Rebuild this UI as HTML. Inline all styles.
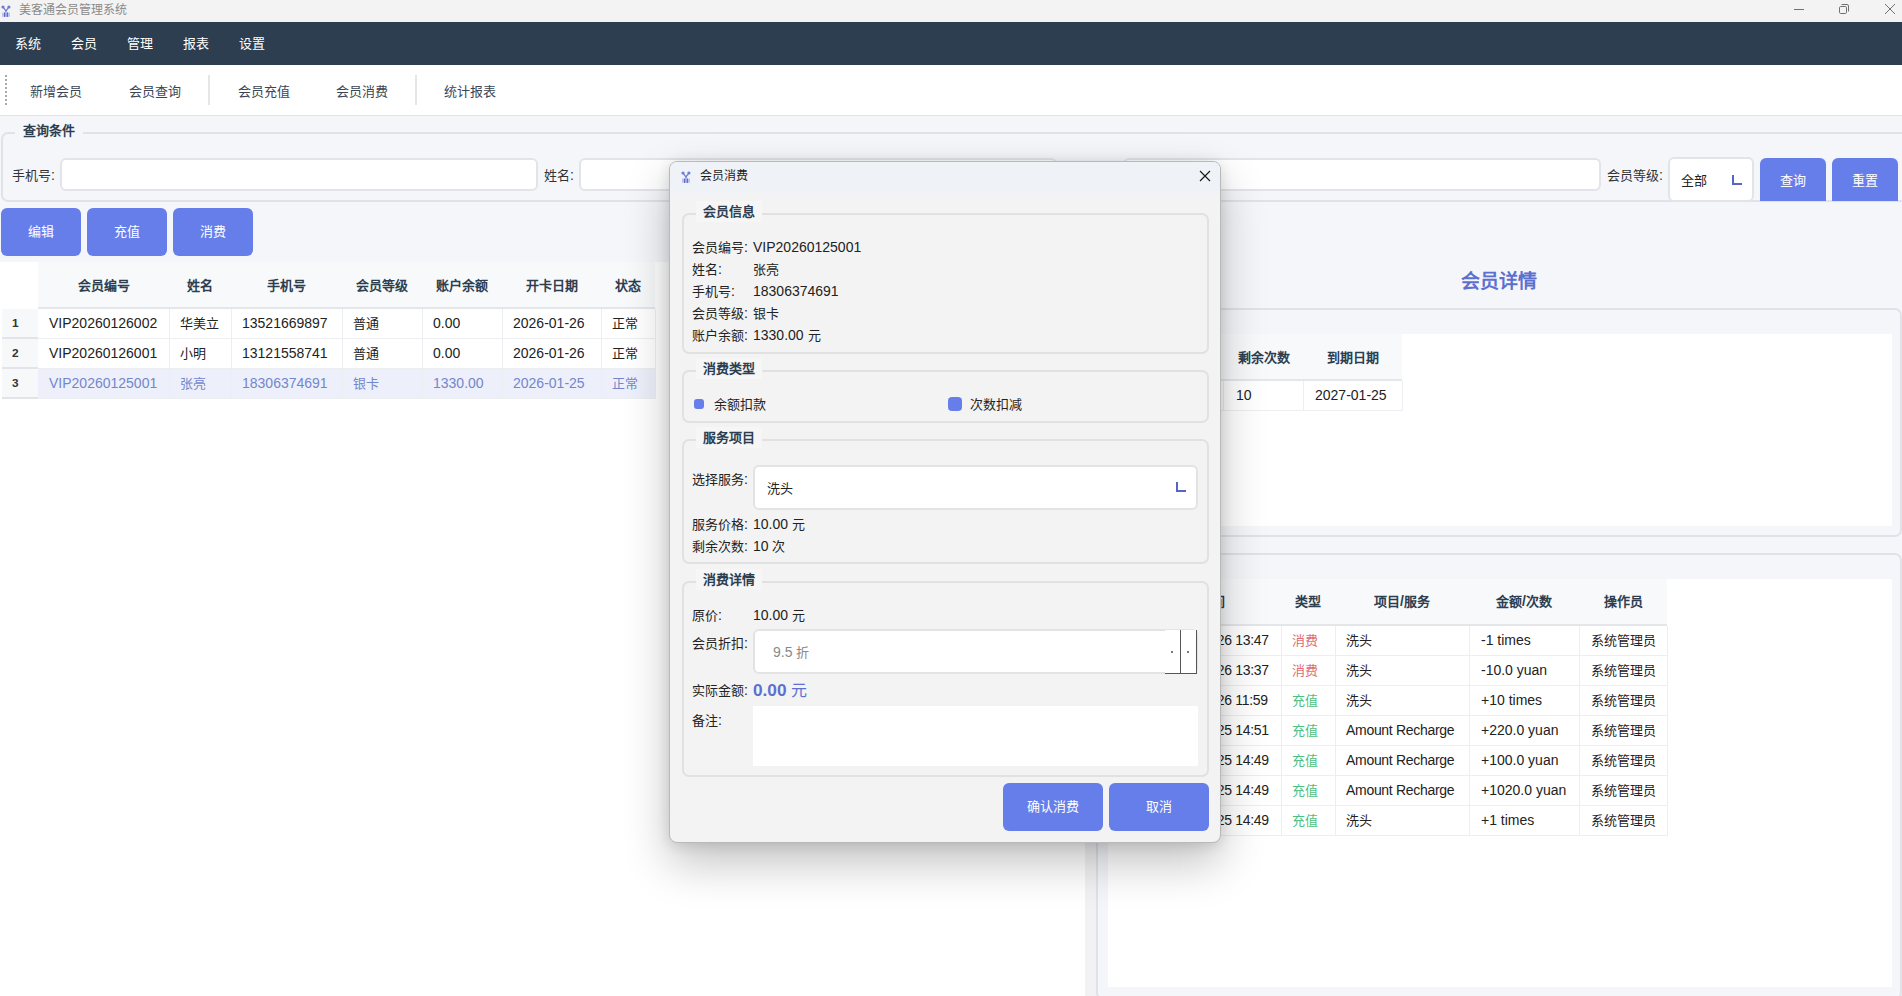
<!DOCTYPE html>
<html lang="zh-CN"><head><meta charset="utf-8">
<style>
*{box-sizing:border-box}
html,body{margin:0;padding:0}
body{width:1902px;height:996px;overflow:hidden;position:relative;background:#f5f6fa;font-family:"Liberation Sans",sans-serif;font-size:13px;color:#333}
.a{position:absolute}
.t{position:absolute;white-space:nowrap;line-height:16px}
/* title bar */
#tb{left:0;top:0;width:1902px;height:22px;background:#f3f3f3}
#mb{left:0;top:22px;width:1902px;height:43px;background:#2c3e50}
.mi{color:#fff;top:35px}
#tool{left:0;top:65px;width:1902px;height:51px;background:#fff;border-bottom:1px solid #e1e3e8}
.ti{color:#3a4654;top:83px}
.gb{position:absolute;border:2px solid #e0e2e7;border-radius:7px}
.gt{position:absolute;font-weight:bold;color:#2c3e50;padding:0 8px;white-space:nowrap;line-height:17px}
.inp{position:absolute;background:#fff;border:2px solid #e2e4e9;border-radius:6px}
.btn{position:absolute;background:#667eea;border-radius:6px;color:#fff;text-align:center}
.lbl{color:#333}
.th{font-weight:bold;color:#2c3e50;text-align:center}
.td{color:#222}
.td.sel{color:#7386cc}
.rn{font-weight:bold;color:#333;font-size:11px}
.dl{color:#222}
.L{font-size:1.077em}
.zh{line-height:17px}
</style></head><body>

<!-- window title bar -->
<div class="a" id="tb"></div>
<svg class="a" style="left:1px;top:5px" width="10" height="12" viewBox="0 0 10 12"><g fill="#6f7dd4"><circle cx="2" cy="2" r="1.6"/><circle cx="7.9" cy="2" r="1.6"/></g><path d="M2.6 2.8L4.95 5.8M7.3 2.8L4.95 5.8" stroke="#6f7dd4" stroke-width="1.3"/><rect x="4.3" y="5.4" width="1.3" height="2" fill="#6775cc"/><rect x="1" y="7.6" width="8" height="4.2" fill="#bac3f2"/><rect x="3" y="7.5" width="1.3" height="4.4" fill="#5f6dc8"/><rect x="5.7" y="7.5" width="1.3" height="4.4" fill="#5f6dc8"/></svg>
<div class="a" style="left:1794px;top:9px;width:10px;height:1px;background:#707070"></div>
<svg class="a" style="left:1838px;top:3px" width="12" height="12" viewBox="0 0 12 12"><rect x="1.5" y="3.5" width="7" height="7" rx="1.2" fill="none" stroke="#707070" stroke-width="1"/><path d="M3.5 1.5H9a1.5 1.5 0 0 1 1.5 1.5V8.5" fill="none" stroke="#707070" stroke-width="1"/></svg>
<svg class="a" style="left:1884px;top:3px" width="12" height="12" viewBox="0 0 12 12"><path d="M1 1L11 11M11 1L1 11" stroke="#707070" stroke-width="1"/></svg>
<div class="t zh" style="left:19px;top:2px;font-size:12px;color:#8a8a8a">美客通会员管理系统</div>

<!-- menu bar -->
<div class="a" id="mb"></div>
<div class="t zh mi" style="left:15px">系统</div>
<div class="t zh mi" style="left:71px">会员</div>
<div class="t zh mi" style="left:127px">管理</div>
<div class="t zh mi" style="left:183px">报表</div>
<div class="t zh mi" style="left:239px">设置</div>

<!-- toolbar -->
<div class="a" id="tool"></div>
<div class="a" style="left:5px;top:75px;width:2px;height:31px;background:repeating-linear-gradient(#a9a9a9 0 2px,transparent 2px 4px)"></div>
<div class="t zh ti" style="left:30px">新增会员</div>
<div class="t zh ti" style="left:129px">会员查询</div>
<div class="a" style="left:208px;top:75px;width:2px;height:30px;background:#e6e6e6"></div>
<div class="t zh ti" style="left:238px">会员充值</div>
<div class="t zh ti" style="left:336px">会员消费</div>
<div class="a" style="left:415px;top:75px;width:2px;height:30px;background:#e6e6e6"></div>
<div class="t zh ti" style="left:444px">统计报表</div>

<!-- search group -->
<div class="gb" style="left:1px;top:132px;width:1910px;height:70px"></div>
<div class="gt" style="left:15px;top:122px;background:#f5f6fa">查询条件</div>
<div class="t lbl" style="left:12px;top:167px">手机号<span class="L">:</span></div>
<div class="inp" style="left:60px;top:158px;width:478px;height:33px"></div>
<div class="t lbl" style="left:544px;top:167px">姓名<span class="L">:</span></div>
<div class="inp" style="left:579px;top:158px;width:478px;height:33px"></div>
<div class="t lbl" style="left:1063px;top:167px">会员卡号<span class="L">:</span></div>
<div class="inp" style="left:1123px;top:158px;width:478px;height:33px"></div>
<div class="t lbl" style="left:1607px;top:167px">会员等级<span class="L">:</span></div>
<div class="inp" style="left:1668px;top:157px;width:86px;height:45px"></div>
<div class="t zh" style="left:1681px;top:172px;color:#222">全部</div>
<div class="a" style="left:1732px;top:175px;width:10px;height:10px;border-left:2px solid #5566c8;border-bottom:2px solid #5566c8"></div>
<div class="btn" style="left:1760px;top:158px;width:66px;height:43px;border-radius:6px 6px 0 0;line-height:46px">查询</div>
<div class="btn" style="left:1832px;top:158px;width:66px;height:43px;border-radius:6px 6px 0 0;line-height:46px">重置</div>

<!-- left panel -->
<div class="btn" style="left:1px;top:208px;width:80px;height:48px;line-height:47px">编辑</div>
<div class="btn" style="left:87px;top:208px;width:80px;height:48px;line-height:47px">充值</div>
<div class="btn" style="left:173px;top:208px;width:80px;height:48px;line-height:47px">消费</div>
<div class="a" style="left:0;top:262px;width:1085px;height:734px;background:#fff"></div>
<div class="a" style="left:38px;top:262px;width:617px;height:46px;background:#f8f9fb"></div>
<div class="a" style="left:38px;top:307px;width:617px;height:2px;background:#e4e6ea"></div>
<div class="t zh th" style="left:38px;top:277px;width:131px">会员编号</div>
<div class="t zh th" style="left:169px;top:277px;width:62px">姓名</div>
<div class="t zh th" style="left:231px;top:277px;width:111px">手机号</div>
<div class="t zh th" style="left:342px;top:277px;width:80px">会员等级</div>
<div class="t zh th" style="left:422px;top:277px;width:80px">账户余额</div>
<div class="t zh th" style="left:502px;top:277px;width:99px">开卡日期</div>
<div class="t zh th" style="left:601px;top:277px;width:54px">状态</div>
<div class="a" style="left:2px;top:309px;width:36px;height:30px;background:#f7f8fa;border-bottom:2px solid #e2e4e8"></div>
<div class="t rn" style="left:12px;top:315px"><span class="L">1</span></div>
<div class="a" style="left:38px;top:309px;width:132px;height:30px;border-right:1px solid #eceef1;border-bottom:1px solid #eceef1"></div>
<div class="t td" style="left:49px;top:315px"><span class="L">VIP20260126002</span></div>
<div class="a" style="left:169px;top:309px;width:63px;height:30px;border-right:1px solid #eceef1;border-bottom:1px solid #eceef1"></div>
<div class="t zh td" style="left:180px;top:315px">华美立</div>
<div class="a" style="left:231px;top:309px;width:112px;height:30px;border-right:1px solid #eceef1;border-bottom:1px solid #eceef1"></div>
<div class="t td" style="left:242px;top:315px"><span class="L">13521669897</span></div>
<div class="a" style="left:342px;top:309px;width:81px;height:30px;border-right:1px solid #eceef1;border-bottom:1px solid #eceef1"></div>
<div class="t zh td" style="left:353px;top:315px">普通</div>
<div class="a" style="left:422px;top:309px;width:81px;height:30px;border-right:1px solid #eceef1;border-bottom:1px solid #eceef1"></div>
<div class="t td" style="left:433px;top:315px"><span class="L">0.00</span></div>
<div class="a" style="left:502px;top:309px;width:100px;height:30px;border-right:1px solid #eceef1;border-bottom:1px solid #eceef1"></div>
<div class="t td" style="left:513px;top:315px"><span class="L">2026-01-26</span></div>
<div class="a" style="left:601px;top:309px;width:55px;height:30px;border-right:1px solid #eceef1;border-bottom:1px solid #eceef1"></div>
<div class="t zh td" style="left:612px;top:315px">正常</div>
<div class="a" style="left:2px;top:339px;width:36px;height:30px;background:#f7f8fa;border-bottom:2px solid #e2e4e8"></div>
<div class="t rn" style="left:12px;top:345px"><span class="L">2</span></div>
<div class="a" style="left:38px;top:339px;width:132px;height:30px;border-right:1px solid #eceef1;border-bottom:1px solid #eceef1"></div>
<div class="t td" style="left:49px;top:345px"><span class="L">VIP20260126001</span></div>
<div class="a" style="left:169px;top:339px;width:63px;height:30px;border-right:1px solid #eceef1;border-bottom:1px solid #eceef1"></div>
<div class="t zh td" style="left:180px;top:345px">小明</div>
<div class="a" style="left:231px;top:339px;width:112px;height:30px;border-right:1px solid #eceef1;border-bottom:1px solid #eceef1"></div>
<div class="t td" style="left:242px;top:345px"><span class="L">13121558741</span></div>
<div class="a" style="left:342px;top:339px;width:81px;height:30px;border-right:1px solid #eceef1;border-bottom:1px solid #eceef1"></div>
<div class="t zh td" style="left:353px;top:345px">普通</div>
<div class="a" style="left:422px;top:339px;width:81px;height:30px;border-right:1px solid #eceef1;border-bottom:1px solid #eceef1"></div>
<div class="t td" style="left:433px;top:345px"><span class="L">0.00</span></div>
<div class="a" style="left:502px;top:339px;width:100px;height:30px;border-right:1px solid #eceef1;border-bottom:1px solid #eceef1"></div>
<div class="t td" style="left:513px;top:345px"><span class="L">2026-01-26</span></div>
<div class="a" style="left:601px;top:339px;width:55px;height:30px;border-right:1px solid #eceef1;border-bottom:1px solid #eceef1"></div>
<div class="t zh td" style="left:612px;top:345px">正常</div>
<div class="a" style="left:2px;top:369px;width:36px;height:30px;background:#f7f8fa;border-bottom:2px solid #e2e4e8"></div>
<div class="t rn" style="left:12px;top:375px"><span class="L">3</span></div>
<div class="a" style="left:38px;top:369px;width:617px;height:29px;background:#edf0fa"></div>
<div class="a" style="left:38px;top:369px;width:132px;height:30px;border-right:1px solid #eceef1;border-bottom:1px solid #eceef1"></div>
<div class="t td sel" style="left:49px;top:375px"><span class="L">VIP20260125001</span></div>
<div class="a" style="left:169px;top:369px;width:63px;height:30px;border-right:1px solid #eceef1;border-bottom:1px solid #eceef1"></div>
<div class="t zh td sel" style="left:180px;top:375px">张亮</div>
<div class="a" style="left:231px;top:369px;width:112px;height:30px;border-right:1px solid #eceef1;border-bottom:1px solid #eceef1"></div>
<div class="t td sel" style="left:242px;top:375px"><span class="L">18306374691</span></div>
<div class="a" style="left:342px;top:369px;width:81px;height:30px;border-right:1px solid #eceef1;border-bottom:1px solid #eceef1"></div>
<div class="t zh td sel" style="left:353px;top:375px">银卡</div>
<div class="a" style="left:422px;top:369px;width:81px;height:30px;border-right:1px solid #eceef1;border-bottom:1px solid #eceef1"></div>
<div class="t td sel" style="left:433px;top:375px"><span class="L">1330.00</span></div>
<div class="a" style="left:502px;top:369px;width:100px;height:30px;border-right:1px solid #eceef1;border-bottom:1px solid #eceef1"></div>
<div class="t td sel" style="left:513px;top:375px"><span class="L">2026-01-25</span></div>
<div class="a" style="left:601px;top:369px;width:55px;height:30px;border-right:1px solid #eceef1;border-bottom:1px solid #eceef1"></div>
<div class="t zh td sel" style="left:612px;top:375px">正常</div>

<!-- splitter + right panel -->
<div class="a" style="left:1085px;top:202px;width:12px;height:794px;background:#f2f2f4"></div>

<!-- right panel -->
<div class="t zh" style="left:1461px;top:271px;font-size:19px;line-height:21px;font-weight:bold;color:#5c70d0">会员详情</div>
<div class="gb" style="left:1096px;top:308px;width:806px;height:229px"></div>
<div class="a" style="left:1108px;top:334px;width:784px;height:192px;background:#fff"></div>
<div class="a" style="left:1108px;top:334px;width:294px;height:46px;background:#f8f9fb"></div>
<div class="a" style="left:1108px;top:379px;width:294px;height:2px;background:#e4e6ea"></div>
<div class="t zh th" style="left:1224px;top:349px;width:79px">剩余次数</div>
<div class="t zh th" style="left:1303px;top:349px;width:99px">到期日期</div>
<div class="a" style="left:1108px;top:381px;width:106px;height:30px;border-right:1px solid #eceef1;border-bottom:1px solid #eceef1"></div>
<div class="a" style="left:1213px;top:381px;width:91px;height:30px;border-right:1px solid #eceef1;border-bottom:1px solid #eceef1"></div>
<div class="a" style="left:1303px;top:381px;width:100px;height:30px;border-right:1px solid #eceef1;border-bottom:1px solid #eceef1"></div>
<div class="a" style="left:1223px;top:381px;width:1px;height:30px;background:#eceef1"></div>
<div class="t td" style="left:1236px;top:387px"><span class="L">10</span></div>
<div class="t td" style="left:1315px;top:387px"><span class="L">2027-01-25</span></div>
<div class="gb" style="left:1096px;top:553px;width:806px;height:447px"></div>
<div class="a" style="left:1108px;top:579px;width:784px;height:408px;background:#fff"></div>
<div class="a" style="left:1108px;top:579px;width:559px;height:46px;background:#f8f9fb"></div>
<div class="a" style="left:1108px;top:624px;width:559px;height:2px;background:#e4e6ea"></div>
<div class="t zh th" style="left:1142px;top:593px;width:139px">时间</div>
<div class="t zh th" style="left:1281px;top:593px;width:54px">类型</div>
<div class="t th" style="left:1335px;top:593px;width:134px">项目<span class="L">/</span>服务</div>
<div class="t th" style="left:1469px;top:593px;width:110px">金额<span class="L">/</span>次数</div>
<div class="t zh th" style="left:1579px;top:593px;width:88px">操作员</div>
<div class="a" style="left:1142px;top:626px;width:140px;height:30px;border-right:1px solid #eceef1;border-bottom:1px solid #eceef1"></div>
<div class="a" style="left:1281px;top:626px;width:55px;height:30px;border-right:1px solid #eceef1;border-bottom:1px solid #eceef1"></div>
<div class="a" style="left:1335px;top:626px;width:135px;height:30px;border-right:1px solid #eceef1;border-bottom:1px solid #eceef1"></div>
<div class="a" style="left:1469px;top:626px;width:111px;height:30px;border-right:1px solid #eceef1;border-bottom:1px solid #eceef1"></div>
<div class="a" style="left:1579px;top:626px;width:89px;height:30px;border-right:1px solid #eceef1;border-bottom:1px solid #eceef1"></div>
<div class="t td" style="left:1163px;top:632px;letter-spacing:-0.3px"><span class="L">2026-01-26 13:47</span></div>
<div class="t zh" style="left:1292px;top:632px;color:#e06c75">消费</div>
<div class="t zh td" style="left:1346px;top:632px">洗头</div>
<div class="t td" style="left:1481px;top:632px"><span class="L">-1 times</span></div>
<div class="t zh td" style="left:1591px;top:632px">系统管理员</div>
<div class="a" style="left:1142px;top:656px;width:140px;height:30px;border-right:1px solid #eceef1;border-bottom:1px solid #eceef1"></div>
<div class="a" style="left:1281px;top:656px;width:55px;height:30px;border-right:1px solid #eceef1;border-bottom:1px solid #eceef1"></div>
<div class="a" style="left:1335px;top:656px;width:135px;height:30px;border-right:1px solid #eceef1;border-bottom:1px solid #eceef1"></div>
<div class="a" style="left:1469px;top:656px;width:111px;height:30px;border-right:1px solid #eceef1;border-bottom:1px solid #eceef1"></div>
<div class="a" style="left:1579px;top:656px;width:89px;height:30px;border-right:1px solid #eceef1;border-bottom:1px solid #eceef1"></div>
<div class="t td" style="left:1163px;top:662px;letter-spacing:-0.3px"><span class="L">2026-01-26 13:37</span></div>
<div class="t zh" style="left:1292px;top:662px;color:#e06c75">消费</div>
<div class="t zh td" style="left:1346px;top:662px">洗头</div>
<div class="t td" style="left:1481px;top:662px"><span class="L">-10.0 yuan</span></div>
<div class="t zh td" style="left:1591px;top:662px">系统管理员</div>
<div class="a" style="left:1142px;top:686px;width:140px;height:30px;border-right:1px solid #eceef1;border-bottom:1px solid #eceef1"></div>
<div class="a" style="left:1281px;top:686px;width:55px;height:30px;border-right:1px solid #eceef1;border-bottom:1px solid #eceef1"></div>
<div class="a" style="left:1335px;top:686px;width:135px;height:30px;border-right:1px solid #eceef1;border-bottom:1px solid #eceef1"></div>
<div class="a" style="left:1469px;top:686px;width:111px;height:30px;border-right:1px solid #eceef1;border-bottom:1px solid #eceef1"></div>
<div class="a" style="left:1579px;top:686px;width:89px;height:30px;border-right:1px solid #eceef1;border-bottom:1px solid #eceef1"></div>
<div class="t td" style="left:1163px;top:692px;letter-spacing:-0.3px"><span class="L">2026-01-26 11:59</span></div>
<div class="t zh" style="left:1292px;top:692px;color:#4dbf80">充值</div>
<div class="t zh td" style="left:1346px;top:692px">洗头</div>
<div class="t td" style="left:1481px;top:692px"><span class="L">+10 times</span></div>
<div class="t zh td" style="left:1591px;top:692px">系统管理员</div>
<div class="a" style="left:1142px;top:716px;width:140px;height:30px;border-right:1px solid #eceef1;border-bottom:1px solid #eceef1"></div>
<div class="a" style="left:1281px;top:716px;width:55px;height:30px;border-right:1px solid #eceef1;border-bottom:1px solid #eceef1"></div>
<div class="a" style="left:1335px;top:716px;width:135px;height:30px;border-right:1px solid #eceef1;border-bottom:1px solid #eceef1"></div>
<div class="a" style="left:1469px;top:716px;width:111px;height:30px;border-right:1px solid #eceef1;border-bottom:1px solid #eceef1"></div>
<div class="a" style="left:1579px;top:716px;width:89px;height:30px;border-right:1px solid #eceef1;border-bottom:1px solid #eceef1"></div>
<div class="t td" style="left:1163px;top:722px;letter-spacing:-0.3px"><span class="L">2026-01-25 14:51</span></div>
<div class="t zh" style="left:1292px;top:722px;color:#4dbf80">充值</div>
<div class="t td" style="left:1346px;top:722px;letter-spacing:-0.3px"><span class="L">Amount Recharge</span></div>
<div class="t td" style="left:1481px;top:722px"><span class="L">+220.0 yuan</span></div>
<div class="t zh td" style="left:1591px;top:722px">系统管理员</div>
<div class="a" style="left:1142px;top:746px;width:140px;height:30px;border-right:1px solid #eceef1;border-bottom:1px solid #eceef1"></div>
<div class="a" style="left:1281px;top:746px;width:55px;height:30px;border-right:1px solid #eceef1;border-bottom:1px solid #eceef1"></div>
<div class="a" style="left:1335px;top:746px;width:135px;height:30px;border-right:1px solid #eceef1;border-bottom:1px solid #eceef1"></div>
<div class="a" style="left:1469px;top:746px;width:111px;height:30px;border-right:1px solid #eceef1;border-bottom:1px solid #eceef1"></div>
<div class="a" style="left:1579px;top:746px;width:89px;height:30px;border-right:1px solid #eceef1;border-bottom:1px solid #eceef1"></div>
<div class="t td" style="left:1163px;top:752px;letter-spacing:-0.3px"><span class="L">2026-01-25 14:49</span></div>
<div class="t zh" style="left:1292px;top:752px;color:#4dbf80">充值</div>
<div class="t td" style="left:1346px;top:752px;letter-spacing:-0.3px"><span class="L">Amount Recharge</span></div>
<div class="t td" style="left:1481px;top:752px"><span class="L">+100.0 yuan</span></div>
<div class="t zh td" style="left:1591px;top:752px">系统管理员</div>
<div class="a" style="left:1142px;top:776px;width:140px;height:30px;border-right:1px solid #eceef1;border-bottom:1px solid #eceef1"></div>
<div class="a" style="left:1281px;top:776px;width:55px;height:30px;border-right:1px solid #eceef1;border-bottom:1px solid #eceef1"></div>
<div class="a" style="left:1335px;top:776px;width:135px;height:30px;border-right:1px solid #eceef1;border-bottom:1px solid #eceef1"></div>
<div class="a" style="left:1469px;top:776px;width:111px;height:30px;border-right:1px solid #eceef1;border-bottom:1px solid #eceef1"></div>
<div class="a" style="left:1579px;top:776px;width:89px;height:30px;border-right:1px solid #eceef1;border-bottom:1px solid #eceef1"></div>
<div class="t td" style="left:1163px;top:782px;letter-spacing:-0.3px"><span class="L">2026-01-25 14:49</span></div>
<div class="t zh" style="left:1292px;top:782px;color:#4dbf80">充值</div>
<div class="t td" style="left:1346px;top:782px;letter-spacing:-0.3px"><span class="L">Amount Recharge</span></div>
<div class="t td" style="left:1481px;top:782px"><span class="L">+1020.0 yuan</span></div>
<div class="t zh td" style="left:1591px;top:782px">系统管理员</div>
<div class="a" style="left:1142px;top:806px;width:140px;height:30px;border-right:1px solid #eceef1;border-bottom:1px solid #eceef1"></div>
<div class="a" style="left:1281px;top:806px;width:55px;height:30px;border-right:1px solid #eceef1;border-bottom:1px solid #eceef1"></div>
<div class="a" style="left:1335px;top:806px;width:135px;height:30px;border-right:1px solid #eceef1;border-bottom:1px solid #eceef1"></div>
<div class="a" style="left:1469px;top:806px;width:111px;height:30px;border-right:1px solid #eceef1;border-bottom:1px solid #eceef1"></div>
<div class="a" style="left:1579px;top:806px;width:89px;height:30px;border-right:1px solid #eceef1;border-bottom:1px solid #eceef1"></div>
<div class="t td" style="left:1163px;top:812px;letter-spacing:-0.3px"><span class="L">2026-01-25 14:49</span></div>
<div class="t zh" style="left:1292px;top:812px;color:#4dbf80">充值</div>
<div class="t zh td" style="left:1346px;top:812px">洗头</div>
<div class="t td" style="left:1481px;top:812px"><span class="L">+1 times</span></div>
<div class="t zh td" style="left:1591px;top:812px">系统管理员</div>

<!-- DIALOG -->
<div class="a" style="left:669px;top:161px;width:552px;height:682px;background:#f3f3f3;border:1px solid #b9b9b9;border-radius:8px;box-shadow:0 20px 46px rgba(0,0,0,0.24),0 2px 14px rgba(0,0,0,0.12);overflow:hidden"><div class="a" style="left:0;top:0;width:100%;height:31px;background:#eff2f7"></div></div>
<svg class="a" style="left:681px;top:171px" width="10" height="12" viewBox="0 0 10 12"><g fill="#6f7dd4"><circle cx="2" cy="2" r="1.6"/><circle cx="7.9" cy="2" r="1.6"/></g><path d="M2.6 2.8L4.95 5.8M7.3 2.8L4.95 5.8" stroke="#6f7dd4" stroke-width="1.3"/><rect x="4.3" y="5.4" width="1.3" height="2" fill="#6775cc"/><rect x="1" y="7.6" width="8" height="4.2" fill="#bac3f2"/><rect x="3" y="7.5" width="1.3" height="4.4" fill="#5f6dc8"/><rect x="5.7" y="7.5" width="1.3" height="4.4" fill="#5f6dc8"/></svg>
<div class="t zh" style="left:700px;top:168px;font-size:12px;color:#1a1a1a">会员消费</div>
<svg class="a" style="left:1199px;top:170px" width="12" height="12" viewBox="0 0 12 12"><path d="M1 1L11 11M11 1L1 11" stroke="#1a1a1a" stroke-width="1.15"/></svg>
<div class="gb" style="left:682px;top:213px;width:527px;height:141px;border-color:#e1e1e1"></div>
<div class="gt" style="left:696px;top:201px;background:#f6f6f6;padding:2px 7px;line-height:17px">会员信息</div>
<div class="t dl" style="left:692px;top:239px">会员编号<span class="L">:</span></div>
<div class="t dl" style="left:753px;top:239px"><span class="L">VIP20260125001</span></div>
<div class="t dl" style="left:692px;top:261px">姓名<span class="L">:</span></div>
<div class="t zh dl" style="left:753px;top:261px">张亮</div>
<div class="t dl" style="left:692px;top:283px">手机号<span class="L">:</span></div>
<div class="t dl" style="left:753px;top:283px"><span class="L">18306374691</span></div>
<div class="t dl" style="left:692px;top:305px">会员等级<span class="L">:</span></div>
<div class="t zh dl" style="left:753px;top:305px">银卡</div>
<div class="t dl" style="left:692px;top:327px">账户余额<span class="L">:</span></div>
<div class="t dl" style="left:753px;top:327px"><span class="L">1330.00 </span>元</div>
<div class="gb" style="left:682px;top:370px;width:527px;height:53px;border-color:#e1e1e1"></div>
<div class="gt" style="left:696px;top:358px;background:#f6f6f6;padding:2px 7px;line-height:17px">消费类型</div>
<div class="a" style="left:694px;top:399px;width:10px;height:10px;border-radius:3px;background:#667eea"></div>
<div class="t zh dl" style="left:714px;top:396px">余额扣款</div>
<div class="a" style="left:948px;top:397px;width:14px;height:14px;border-radius:4px;background:#667eea"></div>
<div class="t zh dl" style="left:970px;top:396px">次数扣减</div>
<div class="gb" style="left:682px;top:439px;width:527px;height:125px;border-color:#e1e1e1"></div>
<div class="gt" style="left:696px;top:427px;background:#f6f6f6;padding:2px 7px;line-height:17px">服务项目</div>
<div class="t dl" style="left:692px;top:471px">选择服务<span class="L">:</span></div>
<div class="inp" style="left:753px;top:465px;width:445px;height:45px;border-color:#e3e3e3"></div>
<div class="t zh dl" style="left:767px;top:480px">洗头</div>
<div class="a" style="left:1176px;top:482px;width:10px;height:10px;border-left:2px solid #5566c8;border-bottom:2px solid #5566c8"></div>
<div class="t dl" style="left:692px;top:516px">服务价格<span class="L">:</span></div>
<div class="t dl" style="left:753px;top:516px"><span class="L">10.00 </span>元</div>
<div class="t dl" style="left:692px;top:538px">剩余次数<span class="L">:</span></div>
<div class="t dl" style="left:753px;top:538px"><span class="L">10 </span>次</div>
<div class="gb" style="left:682px;top:581px;width:527px;height:196px;border-color:#e1e1e1"></div>
<div class="gt" style="left:696px;top:569px;background:#f6f6f6;padding:2px 7px;line-height:17px">消费详情</div>
<div class="t dl" style="left:692px;top:607px">原价<span class="L">:</span></div>
<div class="t dl" style="left:753px;top:607px"><span class="L">10.00 </span>元</div>
<div class="t dl" style="left:692px;top:635px">会员折扣<span class="L">:</span></div>
<div class="inp" style="left:753px;top:629px;width:445px;height:45px;border-color:#e3e3e3"></div>
<div class="t" style="left:773px;top:644px;color:#888"><span class="L">9.5 </span>折</div>
<div class="a" style="left:1165px;top:630px;width:16px;height:44px;background:#fff;border-right:1px solid #555;border-bottom:1px solid #555"></div>
<div class="a" style="left:1181px;top:630px;width:16px;height:44px;background:#fff;border-right:1px solid #555;border-bottom:1px solid #555"></div>
<div class="a" style="left:1171px;top:651px;width:2px;height:2px;background:#777"></div>
<div class="a" style="left:1187px;top:651px;width:2px;height:2px;background:#777"></div>
<div class="t dl" style="left:692px;top:682px">实际金额<span class="L">:</span></div>
<div class="t" style="left:753px;top:681px;font-size:16px;line-height:18px;font-weight:bold;color:#5d70d2"><span class="L">0.00 </span><span style="font-weight:normal">元</span></div>
<div class="t dl" style="left:692px;top:712px">备注<span class="L">:</span></div>
<div class="a" style="left:753px;top:706px;width:445px;height:60px;background:#fff"></div>
<div class="btn" style="left:1003px;top:783px;width:100px;height:48px;line-height:47px">确认消费</div>
<div class="btn" style="left:1109px;top:783px;width:100px;height:48px;line-height:47px">取消</div>
</body></html>
